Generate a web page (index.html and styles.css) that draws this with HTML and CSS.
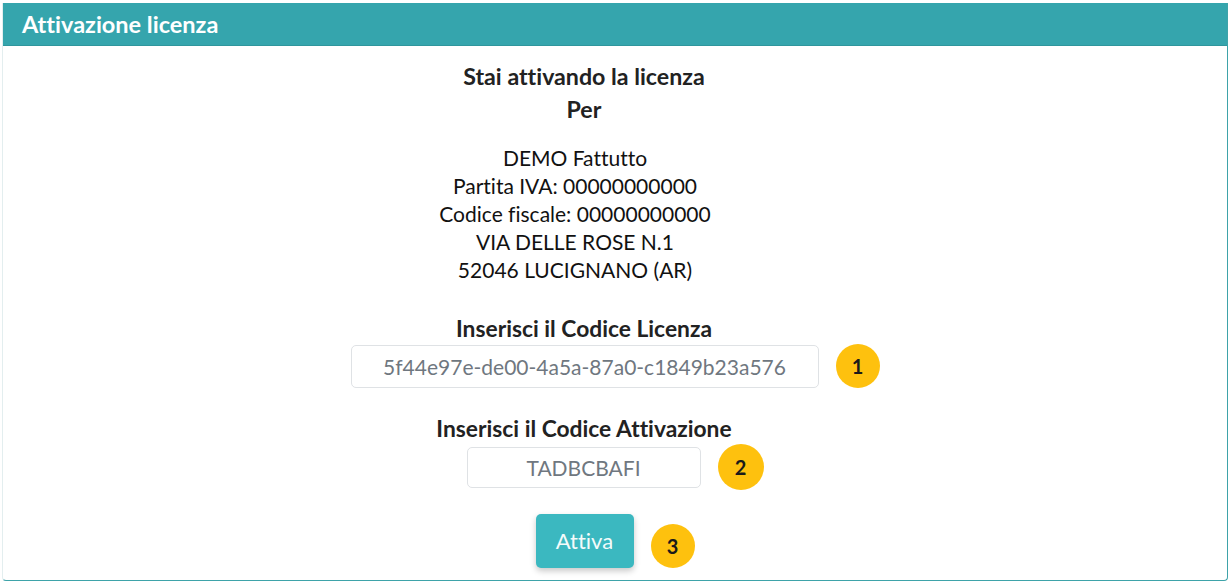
FILE: index.html
```html
<!DOCTYPE html>
<html lang="it">
<head>
<meta charset="utf-8">
<title>Attivazione licenza</title>
<link rel="stylesheet" href="styles.css">
</head>
<body>
<div class="panel">
  <div class="panel-header">Attivazione licenza</div>
  <div class="panel-body">
    <div class="intro">
      <div>Stai attivando la licenza</div>
      <div>Per</div>
    </div>
    <div class="address">
      <div>DEMO Fattutto</div>
      <div>Partita IVA: 00000000000</div>
      <div>Codice fiscale: 00000000000</div>
      <div>VIA DELLE ROSE N.1</div>
      <div>52046 LUCIGNANO (AR)</div>
    </div>
    <div class="label label-first">Inserisci il Codice Licenza</div>
    <div class="row">
      <input class="field field-license" type="text" value="5f44e97e-de00-4a5a-87a0-c1849b23a576">
      <span class="badge">1</span>
    </div>
    <div class="label label-second">Inserisci il Codice Attivazione</div>
    <div class="row">
      <input class="field field-activation" type="text" value="TADBCBAFI">
      <span class="badge badge-2">2</span>
    </div>
    <div class="row row-button">
      <button class="btn" type="button">Attiva</button>
      <span class="badge badge-3">3</span>
    </div>
  </div>
</div>
</body>
</html>
```
FILE: styles.css
```css
html, body {
  margin: 0;
  padding: 0;
  background: #ffffff;
}
body {
  font-family: "Lato", "Open Sans", sans-serif;
  font-variant-ligatures: none;
  color: #222;
}
.panel {
  margin: 3px 3px 0 2px;
  height: 578px;
  border: 1px solid #3ea3a9;
  border-left-color: #e3eeef;
  border-top: none;
  border-radius: 0 0 4px 4px;
  box-sizing: border-box;
  display: flex;
  flex-direction: column;
}
.panel-header {
  background: #35a5ad;
  height: 42px;
  border-bottom: 1px solid #2f969d;
  color: #fff;
  font-weight: 700;
  font-size: 23.5px;
  padding-left: 19px;
  display: flex;
  align-items: center;
}
.panel-body {
  display: flex;
  flex-direction: column;
  align-items: center;
}
.intro {
  padding-top: 14px;
  padding-right: 62px;
  text-align: center;
  font-weight: 700;
  font-size: 23.2px;
  line-height: 33px;
  color: #222;
}
.address {
  margin-top: 18px;
  padding-right: 80px;
  text-align: center;
  font-size: 21px;
  line-height: 28px;
  color: #111;
}
.label {
  padding-right: 62px;
  font-weight: 700;
  font-size: 22.8px;
  line-height: 28px;
  color: #222;
}
.label-first {
  margin-top: 30px;
}
.label-second {
  margin-top: 26px;
}
.row {
  display: flex;
  align-items: center;
  gap: 17px;
  margin-top: 2px;
}
.field {
  box-sizing: border-box;
  border: 1px solid #dfe2e5;
  border-radius: 5px;
  font-family: "Lato", "Open Sans", sans-serif;
  font-variant-ligatures: none;
  font-size: 21px;
  color: #6f7780;
  text-align: center;
  background: #fff;
  outline: none;
}
.field-license {
  width: 468px;
  height: 43px;
}
.field-activation {
  width: 234px;
  height: 41px;
}
.badge {
  width: 44px;
  height: 44px;
  border-radius: 50%;
  background: #fec10e;
  color: #1a1a1a;
  font-size: 20px;
  font-weight: 700;
  display: flex;
  align-items: center;
  justify-content: center;
  flex: none;
}
.badge-2 {
  width: 46px;
  height: 46px;
}
.row-button {
  margin-top: 23.5px;
}
.btn {
  width: 98px;
  height: 54px;
  border: none;
  border-radius: 5px;
  background: #3bb8c0;
  color: #f4fbfb;
  font-family: "Lato", "Open Sans", sans-serif;
  font-variant-ligatures: none;
  font-size: 22px;
  box-shadow: 0 3px 6px rgba(0, 0, 0, 0.22);
  padding: 0;
}
.badge-3 {
  margin-top: 10px;
}
```
